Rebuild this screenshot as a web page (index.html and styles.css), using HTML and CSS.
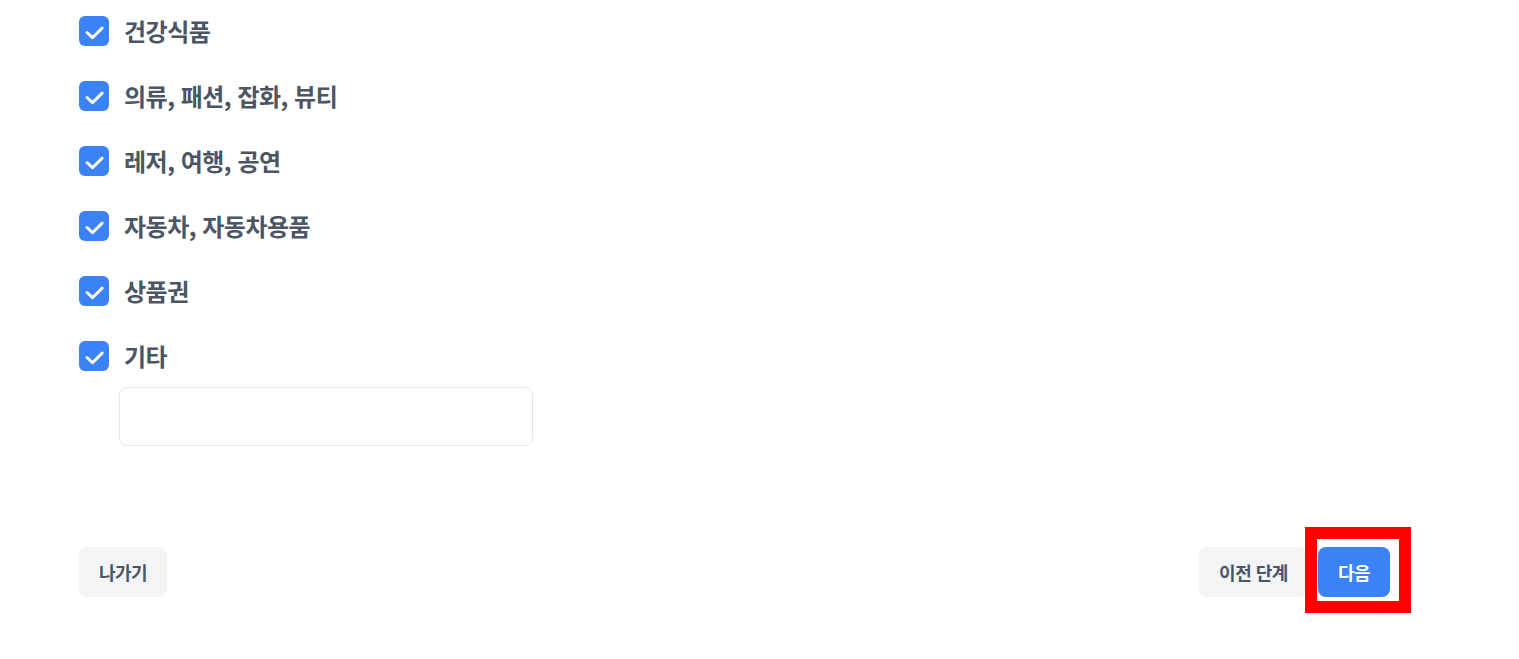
FILE: index.html
```html
<!DOCTYPE html>
<html lang="ko">
<head>
<meta charset="UTF-8">
<meta name="viewport" content="width=device-width, initial-scale=1.0">
<title>관심 카테고리</title>
<link rel="stylesheet" href="styles.css">
</head>
<body>

<div class="container">
    <ul class="category-list">
        <li class="category-item">
            <span class="checkbox"><svg viewBox="0 0 30 30"><path d="M8 16.5l5.5 5.2 9.6-9.6"/></svg></span>
            <span class="category-label">건강식품</span>
        </li>
        <li class="category-item">
            <span class="checkbox"><svg viewBox="0 0 30 30"><path d="M8 16.5l5.5 5.2 9.6-9.6"/></svg></span>
            <span class="category-label">의류, 패션, 잡화, 뷰티</span>
        </li>
        <li class="category-item">
            <span class="checkbox"><svg viewBox="0 0 30 30"><path d="M8 16.5l5.5 5.2 9.6-9.6"/></svg></span>
            <span class="category-label">레저, 여행, 공연</span>
        </li>
        <li class="category-item">
            <span class="checkbox"><svg viewBox="0 0 30 30"><path d="M8 16.5l5.5 5.2 9.6-9.6"/></svg></span>
            <span class="category-label">자동차, 자동차용품</span>
        </li>
        <li class="category-item">
            <span class="checkbox"><svg viewBox="0 0 30 30"><path d="M8 16.5l5.5 5.2 9.6-9.6"/></svg></span>
            <span class="category-label">상품권</span>
        </li>
        <li class="category-item">
            <span class="checkbox"><svg viewBox="0 0 30 30"><path d="M8 16.5l5.5 5.2 9.6-9.6"/></svg></span>
            <span class="category-label">기타</span>
        </li>
    </ul>
    <input type="text" class="etc-input">

    <div class="footer">
        <button class="btn btn-gray">나가기</button>
        <div class="footer-right">
            <button class="btn btn-gray">이전 단계</button>
            <span class="highlight">
                <button class="btn btn-primary">다음</button>
            </span>
        </div>
    </div>
</div>

</body>
</html>
```

FILE: styles.css
```css
body {
    font-family: "Noto Sans CJK KR", "Noto Sans", sans-serif;
    margin: 0;
    padding: 0;
    background-color: #fff;
    color: #4b5563;
}
.container {
    width: 1311px;
    padding: 16px 0 62px 79px;
}
.category-list {
    list-style: none;
    margin: 0;
    padding: 0;
    display: flex;
    flex-direction: column;
    gap: 35px;
}
.category-item {
    display: flex;
    align-items: center;
    height: 30px;
    gap: 15px;
}
.checkbox {
    width: 30px;
    height: 30px;
    border-radius: 6px;
    background-color: #3b82f6;
    display: block;
}
.checkbox svg {
    width: 30px;
    height: 30px;
    display: block;
    fill: none;
    stroke: #fff;
    stroke-width: 3;
    stroke-linecap: round;
    stroke-linejoin: round;
}
.category-label {
    font-size: 24px;
    font-weight: 700;
    line-height: 30px;
    letter-spacing: -0.5px;
}
.etc-input {
    display: block;
    margin: 16px 0 0 40px;
    width: 414px;
    height: 59px;
    box-sizing: border-box;
    border: 1px solid #e5e7eb;
    border-radius: 8px;
    outline: none;
}
.footer {
    display: flex;
    justify-content: space-between;
    margin-top: 101px;
}
.footer-right {
    display: flex;
    gap: 10px;
}
.btn {
    font-family: inherit;
    font-size: 18px;
    font-weight: 700;
    letter-spacing: -0.5px;
    height: 50px;
    padding: 0 20px;
    border: none;
    border-radius: 8px;
    cursor: pointer;
}
.btn-gray {
    background-color: #f3f4f6;
    color: #4b5563;
}
.btn-primary {
    background-color: #3b82f6;
    color: #fff;
    position: relative;
    z-index: 1;
}
.highlight {
    position: relative;
    display: block;
}
.highlight::before {
    content: "";
    position: absolute;
    left: -13px;
    top: -20px;
    width: 106px;
    height: 86px;
    box-sizing: border-box;
    border: 12px solid #ff0000;
    background-color: #fff;
}
```
